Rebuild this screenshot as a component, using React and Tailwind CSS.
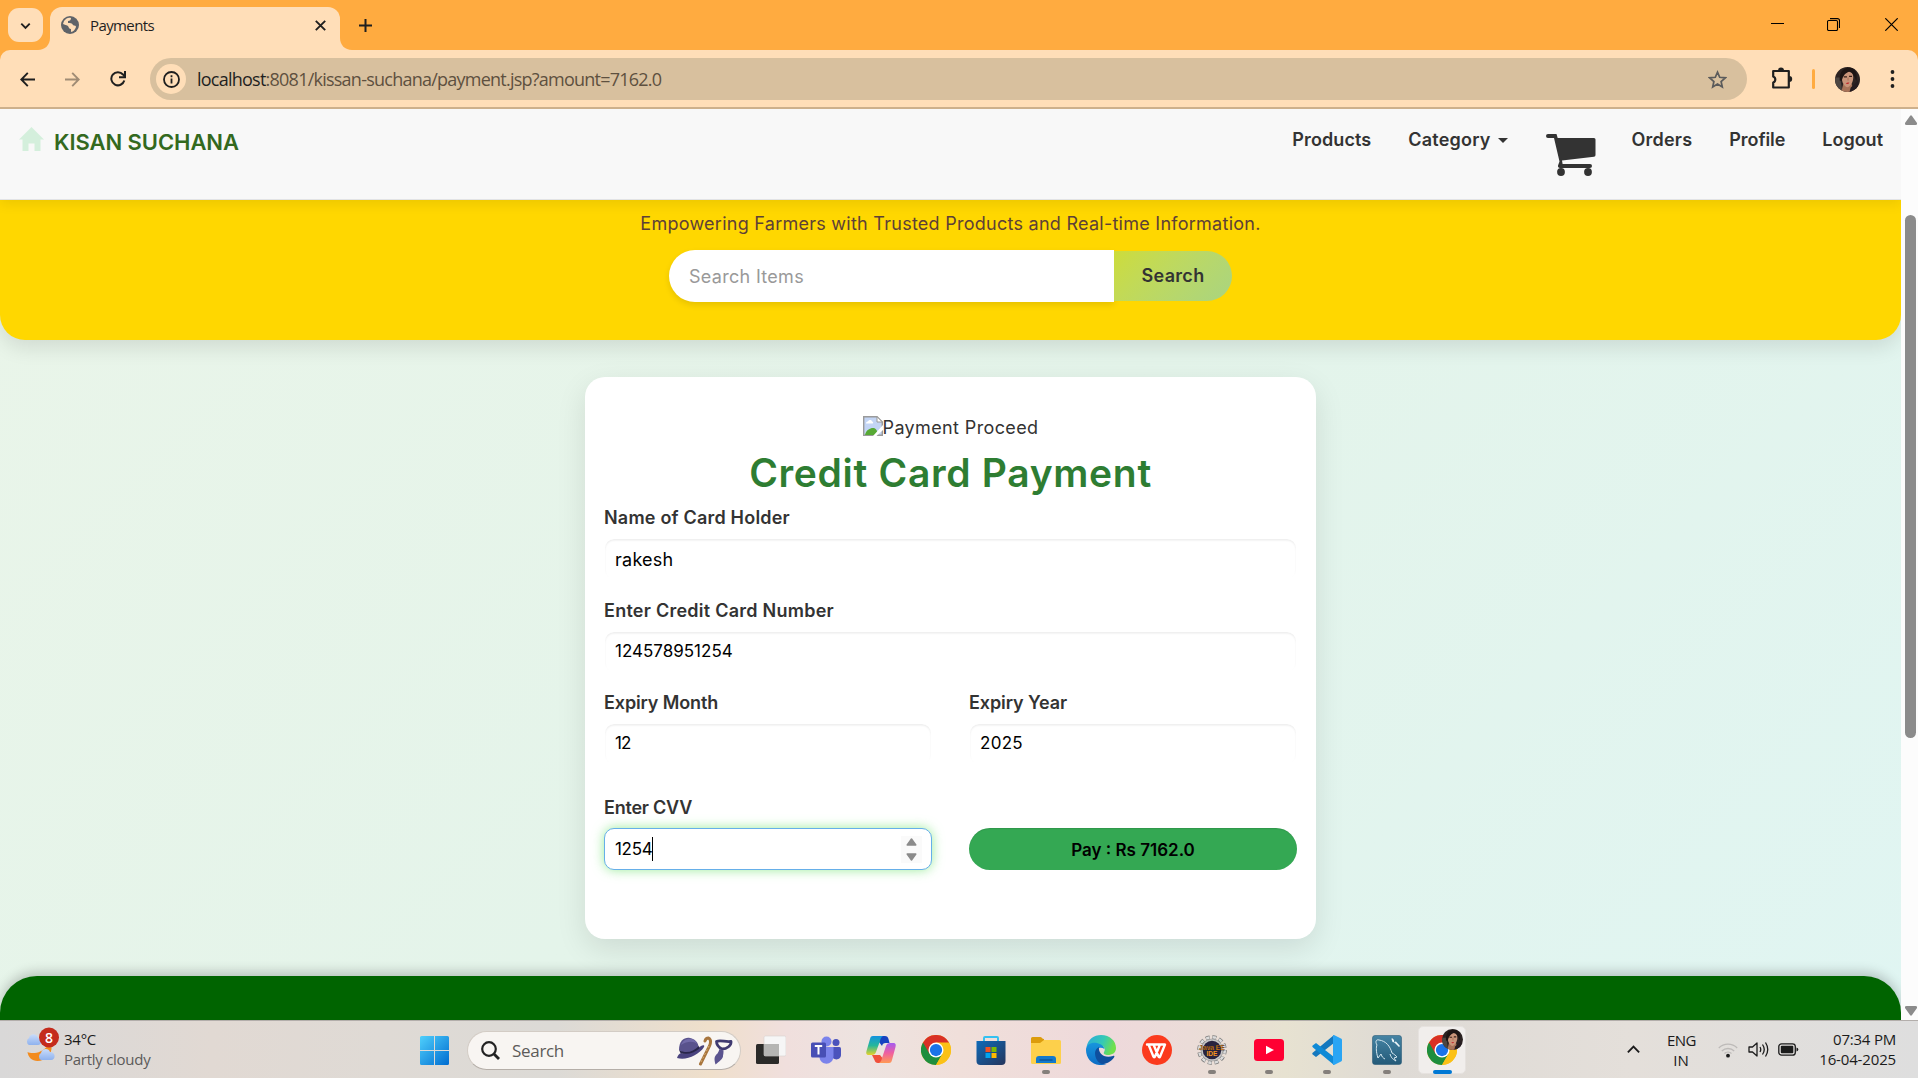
import React from "react";

function Chevron({ className, up }) {
  return (
    <svg className={className} viewBox="0 0 16 16" fill="none" stroke="currentColor" strokeWidth="2">
      <path d={up ? "M2 11l6-6 6 6" : "M3.5 6l4.5 4.5L12.500 6"} />
    </svg>
  );
}

function Portrait({ className }) {
  return (
    <svg className={className} viewBox="0 0 24 24">
      <defs>
        <clipPath id="face-clip"><circle cx="12" cy="12" r="12" /></clipPath>
      </defs>
      <g clipPath="url(#face-clip)">
        <rect width="24" height="24" fill="#2c2322" />
        <path d="M0 10h5l2 14H0z" fill="#4d4642" />
        <path d="M8 16h8l2 8H6z" fill="#a87358" />
        <path d="M6.500 10c0-5 3-7 6-7s5 3 5 7-2 8-5.500 9.500c-3-1-5.500-4.500-5.500-9.500z" fill="#c9957a" />
        <path d="M4.500 13C4 4 9 .5 14 .5s8 5.500 6.500 13c-1.500-4-3-8-7-9-3.500 1-6 4-7 9z" fill="#1d1514" />
        <path d="M8.500 9.500h3M13.500 9h2.800" stroke="#3a2119" strokeWidth="1.200" />
        <path d="M12.500 10v3" stroke="#a87056" strokeWidth="1" />
        <path d="M10.500 15.500c1.200-.8 2.500-.8 3.300-.3-.8 1.500-2.500 1.500-3.300.3z" fill="#c22a2e" />
        <path d="M15 20l7-7v11h-8z" fill="#251c20" />
      </g>
    </svg>
  );
}

function TabStrip() {
  return (
    <div className="flex h-[50px] shrink-0 bg-[#ffab40] text-[#1f1f1f]">
      <div className="mt-2 ml-2 flex h-[34px] w-[35px] items-center justify-center rounded-[11px] bg-[#ffdeb8]">
        <Chevron className="h-[15px] w-[15px]" />
      </div>
      <svg className="mt-[38px] ml-[-5px] h-3 w-3" viewBox="0 0 12 12"><path d="M12 0v12H0C7 12 12 7 12 0z" fill="#ffdeb8" /></svg>
      <div className="mt-[7px] flex w-[290px] items-center rounded-t-[12px] bg-[#ffdeb8] pb-[7px]">
        <svg className="ml-[11px] h-[18px] w-[18px] shrink-0" viewBox="0 0 18 18">
          <circle cx="9" cy="9" r="9" fill="#5f6368" />
          <path d="M3 5c2-3 5-4 7-3 0 2-1 3-3 3v2c2 0 4 0 5 2 1 1 3 0 3 2-1 3-3 5-6 5v-3c-2 0-2-2-2-3L2 8z" fill="#ffdeb8" />
          <path d="M2 9l5 1c1 2 1 3 3 3v3C5 17 2 13 2 9z" fill="#5f6368" />
          <path d="M11 2c3 1 5 4 5 7-2 0-2-1-4-2s-2-1-2-3z" fill="#5f6368" />
        </svg>
        <span className="ml-[11px] font-['Open_Sans',sans-serif] text-[15px] tracking-[-0.61px]">Payments</span>
        <svg className="mr-[14px] ml-auto h-[11px] w-[11px]" viewBox="0 0 11 11" stroke="currentColor" strokeWidth="1.9"><path d="M.8.8l9.400 9.400M10.200.8L.8 10.200" /></svg>
      </div>
      <svg className="mt-[38px] h-3 w-3" viewBox="0 0 12 12"><path d="M0 0v12h12C5 12 0 7 0 0z" fill="#ffdeb8" /></svg>
      <svg className="mt-[19px] ml-[7px] h-[13px] w-[13px]" viewBox="0 0 13 13" stroke="currentColor" strokeWidth="2"><path d="M6.500 0v13M0 6.500h13" /></svg>
      <div className="ml-auto flex text-black">
        <svg className="mt-[23px] mr-[43px] h-[1px] w-[13px]" viewBox="0 0 13 1"><rect width="13" height="1" /></svg>
        <svg className="mt-[18px] mr-[45px] h-[13px] w-[13px]" viewBox="0 0 13 13" fill="none" stroke="currentColor" strokeWidth="1.100">
          <rect x=".5" y="2.500" width="10" height="10" rx="1.200" />
          <path d="M3 .6h7.500a2 2 0 0 1 2 2V10" />
        </svg>
        <svg className="mt-[18px] mr-5 h-[13px] w-[13px]" viewBox="0 0 13 13" stroke="currentColor" strokeWidth="1.200"><path d="M.3.3l12.400 12.400M12.700.3L.3 12.700" /></svg>
      </div>
    </div>
  );
}

function Toolbar() {
  return (
    <div className="shrink-0 bg-[#ffab40]">
      <div className="flex h-[59px] items-center rounded-t-[10px] border-b-2 border-[#cdb08c] bg-[#ffdeb8] pt-[1px] text-[#1f1f1f]">
        <svg className="ml-5 h-[15px] w-[15px]" viewBox="0 0 15 15" fill="none" stroke="currentColor" strokeWidth="1.900"><path d="M15 7.500H1.500M7.800.9L1.300 7.500l6.500 6.600" /></svg>
        <svg className="ml-[30px] h-[15px] w-[15px]" viewBox="0 0 15 15" fill="none" stroke="#a08c75" strokeWidth="1.900"><path d="M0 7.500h13.500M7.200.9l6.500 6.600-6.500 6.600" /></svg>
        <svg className="ml-[30px] h-4 w-4" viewBox="0 0 16 16" fill="none" stroke="currentColor" strokeWidth="2">
          <path d="M14.300 9.500A6.600 6.600 0 1 1 13 3.500L15 6" />
          <path d="M15 0v6.300H9" />
        </svg>
        <div className="ml-6 flex h-[42px] w-[1597px] items-center rounded-full bg-[#d8c09e]">
          <div className="ml-[6px] flex h-[30px] w-[30px] items-center justify-center rounded-full bg-[#ffdeb8]">
            <svg className="h-[17px] w-[17px]" viewBox="0 0 17 17" fill="none" stroke="currentColor" strokeWidth="1.800"><circle cx="8.500" cy="8.500" r="7.500" /><path d="M8.500 7.500v5M8.500 4.300v1.900" /></svg>
          </div>
          <span className="ml-[11px] pt-[1px] font-['Open_Sans',sans-serif] text-[18px] tracking-[-0.76px] whitespace-nowrap text-[#5e503f]"><span className="text-[#1f1f1f]">localhost</span>:8081/kissan-suchana/payment.jsp?amount=7162.0</span>
          <svg className="mr-5 ml-auto h-[19px] w-[19px]" viewBox="0 0 19 19" fill="none" stroke="#5b5b5b" strokeWidth="1.700"><path d="M9.500 2.200l2.200 5.100 5.600.5-4.200 3.700 1.200 5.500-4.800-2.900L4.700 17l1.200-5.500L1.700 7.800l5.600-.5z" /></svg>
        </div>
        <svg className="mb-[2px] ml-6 h-[22px] w-[22px]" viewBox="0 0 22 22" fill="none" stroke="currentColor" strokeWidth="2.200">
          <path d="M2.200 4h15.600v16.500H2.200v-5a3.200 3.200 0 0 0 0-6z" strokeLinejoin="round" />
          <path d="M7 3.500a3 3 0 0 1 6 0zM18.200 9a3 3 0 0 1 0 6z" fill="currentColor" stroke="none" />
        </svg>
        <div className="ml-[19px] h-5 w-[3px] rounded bg-[#ffab40]" />
        <Portrait className="ml-5 h-[25px] w-[25px]" />
        <svg className="ml-[30px] h-[18px] w-[5px]" viewBox="0 0 5 18" fill="currentColor"><circle cx="2.500" cy="2" r="1.900" /><circle cx="2.500" cy="9" r="1.900" /><circle cx="2.500" cy="16" r="1.900" /></svg>
      </div>
    </div>
  );
}

function SiteNav() {
  return (
    <nav className="relative z-10 flex h-[91px] shrink-0 border-b border-[#e2e3e5] bg-[#f8f8f8] text-[18px] leading-[26px] font-semibold text-[#333] shadow-[0_4px_12px_rgba(0,0,0,0.08)]">
      <svg className="mt-[18px] ml-[19px] h-[24px] w-[25px]" viewBox="0 0 25 24" fill="#d4efdc"><path d="M12.500 0L25 12.500h-3.500V24h-6v-7.500h-6V24h-6V12.500H0z" /></svg>
      <span className="mt-5 ml-[10px] text-[22px] tracking-[-0.06px] text-[#33691e]">KISAN SUCHANA</span>
      <div className="mt-[18px] mr-[18px] ml-auto flex items-start">
        <span className="mr-[37px] tracking-[0.1px]">Products</span>
        <span className="mr-[7px] tracking-[0.2px]">Category</span>
        <svg className="mt-[11px] mr-[38px] h-[5px] w-[10px]" viewBox="0 0 10 5" fill="#333"><path d="M0 0h10L5 5z" /></svg>
        <svg className="mt-[7px] mr-[36px] h-[42px] w-[50px]" viewBox="0 0 50 42" fill="#333">
          <path d="M2 0h8.500l1.200 4H48a1.500 1.500 0 0 1 1.500 1.500V21a1.800 1.800 0 0 1-1.500 1.800L16 26.500l.6 3.500H44a2 2 0 0 1 0 4H14a2 2 0 0 1-2-2.500l1.500-4L8 4H2a2 2 0 0 1 0-4z" />
          <circle cx="15" cy="38" r="3.900" />
          <circle cx="42" cy="38" r="3.900" />
        </svg>
        <span className="mr-[37px] tracking-[0.2px]">Orders</span>
        <span className="mr-[37px] tracking-[-0.07px]">Profile</span>
        <span>Logout</span>
      </div>
    </nav>
  );
}

function Hero() {
  return (
    <section className="flex h-[140px] shrink-0 flex-col items-center rounded-b-[25px] bg-[#ffd700] shadow-[0_8px_20px_rgba(0,0,0,0.1)]">
      <p className="mt-[11px] h-[26px] text-[18px] leading-[26px] tracking-[0.26px] text-[#5d4037]">Empowering Farmers with Trusted Products and Real-time Information.</p>
      <div className="mt-[13px] flex items-center">
        <div className="flex h-[52px] w-[445px] items-center rounded-l-full bg-white pt-[1px] pl-5 text-[18px] tracking-[0.3px] text-[#999] shadow-[0_3px_6px_rgba(0,0,0,0.1)]">Search Items</div>
        <div className="z-10 flex h-[50px] w-[118px] items-center justify-center rounded-r-full bg-linear-135 from-[#cddc39] to-[#a9d480] pb-[1px] text-[18px] font-semibold tracking-[0.3px] text-[#333]">Search</div>
      </div>
    </section>
  );
}

function Field({ label, children }) {
  return (
    <div className="flex-1">
      <div className="h-7 text-[18px] leading-7 font-semibold text-[#333]">{label}</div>
      <div className="mt-[6px] mb-[1px] flex h-[42px] items-center rounded-[10px] border border-white pl-[10px] text-[17px] text-black shadow-[inset_0_1.5px_2px_rgba(0,0,0,0.07)]">{children}</div>
    </div>
  );
}

function PaymentCard() {
  return (
    <section className="mx-auto mt-[37px] h-[562px] w-[731px] shrink-0 rounded-[20px] bg-white px-[19px] pt-[35px] shadow-[0_10px_30px_rgba(0,0,0,0.1)]">
      <div className="flex h-[30px] items-center justify-center text-[18px] tracking-[0.37px] text-[#333]">
        <svg className="mb-[2px] h-5 w-5" viewBox="0 0 20 20">
          <path d="M.7.700H14l5.300 5.300v13.300H.7z" fill="#c3d5f5" stroke="#9a9a9a" strokeWidth="1.400" />
          <path d="M14 .7V6h5.300z" fill="#fff" stroke="#9a9a9a" />
          <path d="M3 7.500c0-1.500 1-2 2-2 .5-2 4-2 4 0 1.500 0 1.500 2 .5 2z" fill="#fff" />
          <path d="M2 19c1-5 5-7 8-7s4 2 5 7z" fill="#57a935" />
          <path d="M20 9L10 20h3.500L20 14z" fill="#fff" />
        </svg>
        Payment Proceed
      </div>
      <h1 className="h-[62px] text-center text-[39px] leading-[62px] font-semibold tracking-[0.68px] text-[#2e7d32]">Credit Card Payment</h1>
      <div className="flex flex-col gap-[15.5px]">
        <Field label={<span className="tracking-[0.2px]">Name of Card Holder</span>}><span className="text-[18px] tracking-[0.25px]">rakesh</span></Field>
        <Field label={<span className="tracking-[0.25px]">Enter Credit Card Number</span>}>124578951254</Field>
        <div className="flex gap-[37px]">
          <Field label={<span className="tracking-[-0.13px]">Expiry Month</span>}><span className="tracking-[-1px]">12</span></Field>
          <Field label={<span className="tracking-[-0.09px]">Expiry Year</span>}><span className="tracking-[0.3px]">2025</span></Field>
        </div>
      </div>
      <div className="mt-7 flex items-end gap-[37px]">
        <div className="flex-1">
          <div className="h-7 text-[18px] leading-7 font-semibold tracking-[-0.23px] text-[#333]">Enter CVV</div>
          <div className="mt-[6px] flex h-[42px] items-center rounded-[10px] border border-[#66afe9] bg-white pl-[10px] text-[17px] text-black shadow-[0_0_12px_rgba(120,230,120,0.75)]">
            <span className="pt-[1px] tracking-[-0.3px]">1254</span>
            <div className="h-6 w-px bg-black" />
            <svg className="mr-[9px] ml-auto h-[27px] w-[21px] bg-[#fafafa]" viewBox="0 0 21 27" fill="#8b8b8b" stroke="#8b8b8b" strokeWidth="1.500" strokeLinejoin="round"><path d="M10.500 3l4.300 6H6.200zM10.500 24l4.300-6H6.200z" /></svg>
          </div>
        </div>
        <div className="flex h-[42px] flex-1 items-center justify-center rounded-full bg-[#34a853] pt-[3px] text-[17px] font-semibold text-black shadow-[inset_0_1px_1px_rgba(0,0,0,0.1)]">Pay : Rs 7162.0</div>
      </div>
    </section>
  );
}

function Scrollbar() {
  return (
    <div className="flex w-[17px] flex-col items-center bg-[#fcfcfc] pl-[2px]">
      <svg className="mt-[6px] h-[10px] w-3" viewBox="0 0 12 10" fill="#8b8b8b"><path d="M5 1q1-1.500 2 0l5 7q.5 2-1.500 2h-9Q-.5 10 0 8z" /></svg>
      <div className="mt-[90px] h-[523px] w-[11px] rounded-full bg-[#8b8b8b]" />
      <svg className="mt-auto mb-[4px] h-[10px] w-3" viewBox="0 0 12 10" fill="#8b8b8b"><path d="M5 9q1 1.500 2 0l5-7q.5-2-1.500-2h-9Q-.5 0 0 2z" /></svg>
    </div>
  );
}

function TaskItem({ className, running, children }) {
  return (
    <div className={className}>
      <div className="h-[30px] w-[30px]">{children}</div>
      {running && <div className="mx-auto mt-[5px] h-1 w-2 rounded-full bg-[#847f7b]" />}
    </div>
  );
}

function ChromeLogo() {
  return (
    <svg className="h-[30px] w-[30px]" viewBox="0 0 48 48">
      <circle cx="24" cy="24" r="24" fill="#fbc116" />
      <path d="M24 24L3.200 12A24 24 0 0 0 24 48l10.400-18z" fill="#1e8e3e" />
      <path d="M24 24h20.800V12A24 24 0 0 0 3.200 12l10.400 18z" fill="#d93025" />
      <path d="M24 12h20.800A24 24 0 0 1 24 48l10.400-18z" fill="#fbc116" />
      <circle cx="24" cy="24" r="12" fill="#fff" />
      <circle cx="24" cy="24" r="9.800" fill="#1a73e8" />
    </svg>
  );
}

function Weather() {
  return (
    <div className="flex w-[420px] font-['Open_Sans',sans-serif] text-[15px] leading-5">
      <svg className="mt-[6px] ml-[25px] h-[36px] w-[35px]" viewBox="0 0 35 36">
        <defs>
          <linearGradient id="cloud" x2="0" y2="1"><stop stopColor="#c9dcfa" /><stop offset="1" stopColor="#8fb2ee" /></linearGradient>
        </defs>
        <path d="M2.500 25c4 2 14 2 21-7l3 1c1 8-6 15-14 15C7 34 3 30 2.500 25z" fill="#f28b1e" />
        <path d="M4 18a4 4 0 0 1 0-7C5 6 12 6 13 11c5 1 4 7 0 7z" fill="url(#cloud)" />
        <path d="M16 33a4 4 0 0 1 0-7c1-5 8-5 9-1 6 0 6 8 1 8z" fill="url(#cloud)" />
        <circle cx="24" cy="10.500" r="10" fill="#c42b1c" />
        <text x="24" y="15.500" textAnchor="middle" fontFamily="Open Sans" fontSize="14" fontWeight="600" fill="#fff">8</text>
      </svg>
      <div className="mt-[8px] ml-[4px]">
        <div className="tracking-[-0.26px] text-[#1b1b1b]">34°C</div>
        <div className="tracking-[-0.27px] text-[#5c5b5a]">Partly cloudy</div>
      </div>
    </div>
  );
}

function SearchPill() {
  return (
    <div className="mt-[10px] ml-[18px] flex h-[39px] w-[274px] items-center rounded-full border border-[#d3ccc5] border-b-[#b5aea8] bg-[#f8f5f2]">
      <svg className="ml-[13px] h-[19px] w-[19px]" viewBox="0 0 19 19" fill="none" stroke="#222" strokeWidth="2.200"><circle cx="8" cy="8" r="6.800" /><path d="M13 13l5 5" strokeWidth="2.800" /></svg>
      <span className="ml-[12px] font-['Open_Sans',sans-serif] text-[17px] tracking-[-0.31px] text-[#5d5b59]">Search</span>
      <svg className="mr-[7px] ml-auto h-[30px] w-[56px]" viewBox="0 0 56 30">
        <path d="M2 14C2 4 8 1 13 2s8 4 9 10c-6 6-13 7-20 2z" fill="#59528c" />
        <path d="M4 9c3-8 14-8 16-1-3-3-10-3-16 1z" fill="#716aa8" />
        <path d="M0 22c1-3 2-4 4-5 7 1 14-2 20-7 2-1 4-1 3 1-5 8-18 14-27 11z" fill="#4a437e" />
        <path d="M2 14c7 4 14 2 20-4l.5 2.500c-6 5-12 6.500-19 4.500z" fill="#29264a" />
        <path d="M23.500 28l9-18c2-5 1-7-1-8-2 0-3 1-3.500 3" fill="none" stroke="#a8753d" strokeWidth="3" strokeLinecap="round" />
        <path d="M24 26l9-18" stroke="#d6ac70" strokeWidth="1" strokeDasharray="2 2" />
        <path d="M39.500 5.500c4-2 9 1 14.500 0 .5 4-4 7.500-9 7.500-3-1.500-5.500-4-5.500-7.500z" fill="none" stroke="#3f3a70" strokeWidth="2.800" strokeLinejoin="round" />
        <path d="M42.500 13l4 1.500c0 2 0 3-.5 5 .5 3-4 6-7.500 9-1.500-6-1.500-8 2-11 1-1.500 1.500-3 2-4.500z" fill="#5b548f" />
      </svg>
    </div>
  );
}

function Taskbar() {
  return (
    <div className="flex h-[58px] shrink-0 items-start border-t border-[#b3aeab] bg-[linear-gradient(90deg,#d9d8d8_0%,#e1d9d3_11%,#dfdad5_20%,#dcdad6_29%,#efdfcb_37%,#f0dfdd_41%,#ede3e0_45%,#f0dfda_50%,#eed9db_58%,#ebdcd8_62%,#e7e2d1_67%,#dedad5_73%,#e4dfda_85%,#dedede_100%)]">
      <Weather />
      <svg className="mt-[15px] h-[29px] w-[29px]" viewBox="0 0 29 29">
        <defs><linearGradient id="win" gradientUnits="userSpaceOnUse" x1="0" y1="0" x2="29" y2="29"><stop stopColor="#4fd0fc" /><stop offset="1" stopColor="#006cd0" /></linearGradient></defs>
        <path d="M1.500 0H14v14H0V1.500A1.500 1.500 0 0 1 1.500 0zM15 0h12.500A1.500 1.500 0 0 1 29 1.500V14H15zM0 15h14v14H1.500A1.500 1.500 0 0 1 0 27.500zM15 15h14v12.500a1.500 1.500 0 0 1-1.500 1.500H15z" fill="url(#win)" />
      </svg>
      <SearchPill />
      <TaskItem className="mt-[14px] ml-[15px]">
        <svg viewBox="0 0 30 30">
          <rect y="9" width="23" height="20" rx="1.500" fill="#2a2a28" />
          <rect x="8" y="1" width="22" height="20" rx="1.500" fill="#f6f6f6" stroke="#d8d4d2" strokeWidth=".6" />
          <path d="M8 9h15v12H8z" fill="#b5b5b3" />
        </svg>
      </TaskItem>
      <TaskItem className="mt-[14px] ml-[25px]">
        <svg viewBox="0 0 30 30">
          <circle cx="25" cy="7.500" r="3.500" fill="#4b53bc" />
          <path d="M20 12h8.500a1.500 1.500 0 0 1 1.500 1.500V20c0 4-5 6-8 3z" fill="#4b53bc" />
          <circle cx="15.500" cy="6.500" r="5" fill="#7b83eb" />
          <path d="M9 12h13.500v9c0 10-13.500 10-14 1z" fill="#7b83eb" />
          <rect y="7.500" width="15" height="15" rx="1.500" fill="#484fb5" />
          <path d="M3.800 11h7.400M7.500 11v8.500" stroke="#fff" strokeWidth="2" />
        </svg>
      </TaskItem>
      <TaskItem className="mt-[14px] ml-[25px]">
        <svg viewBox="0 0 30 30">
          <defs>
            <linearGradient id="co1" x2="0" y2="1"><stop stopColor="#1392df" /><stop offset=".5" stopColor="#25b79b" /><stop offset="1" stopColor="#e6d22a" /></linearGradient>
            <linearGradient id="co2" x2="0" y2="1"><stop stopColor="#a45cf0" /><stop offset=".5" stopColor="#ef5fa0" /><stop offset="1" stopColor="#ff9a55" /></linearGradient>
          </defs>
          <path d="M14 1h5c2 0 3 1 3.500 3l1 4h-4c-2 0-3 1-3.500 3l-3-4z" fill="#1742c0" />
          <path d="M7 1h10c-2 1-2.500 3-3 5l-4 11c-.5 2-2 3-4 3H3c-3 0-3-2-2.500-4L4 4c.5-2 1-3 3-3z" fill="url(#co1)" />
          <path d="M6 20h8l4 5-1 3h-5c-2 0-3-1-3.500-3z" fill="#f0503c" />
          <path d="M23 28H13c2-1 2.500-3 3-5l4-12c.5-2 2-3 4-3h3c3 0 3 2 2.500 4L26 25c-.5 2-1 3-3 3z" fill="url(#co2)" />
        </svg>
      </TaskItem>
      <TaskItem className="mt-[14px] ml-[25px]"><ChromeLogo /></TaskItem>
      <TaskItem className="mt-[14px] ml-[25px]">
        <svg viewBox="0 0 30 30">
          <defs><linearGradient id="store" x2="1" y2="1"><stop stopColor="#0e6ab8" /><stop offset="1" stopColor="#25355c" /></linearGradient></defs>
          <path d="M8 7V3a1 1 0 0 1 1-1h12a1 1 0 0 1 1 1v4" fill="none" stroke="#35c1f1" strokeWidth="2" />
          <path d="M.5 6h29v20a4 4 0 0 1-4 4h-21a4 4 0 0 1-4-4z" fill="url(#store)" />
          <path d="M9.500 12h5v5h-5z" fill="#f25022" /><path d="M15.500 12h5v5h-5z" fill="#7fba00" />
          <path d="M9.500 18h5v5h-5z" fill="#00a4ef" /><path d="M15.500 18h5v5h-5z" fill="#ffb900" />
        </svg>
      </TaskItem>
      <TaskItem className="mt-[14px] ml-[25px]" running>
        <svg viewBox="0 0 30 30">
          <path d="M0 3.500A1.500 1.500 0 0 1 1.500 2H9c2 0 2 2 4 2v6H0z" fill="#dc9c0c" />
          <path d="M0 8h9l4-3h15.500A1.500 1.500 0 0 1 30 6.500v21a1.500 1.500 0 0 1-1.500 1.500h-27A1.500 1.500 0 0 1 0 27.500z" fill="#fdd04b" />
          <path d="M5 28v-4a3 3 0 0 1 3-3h14a3 3 0 0 1 3 3v4z" fill="#1379cc" />
          <path d="M8.500 25h13" stroke="#0b4f94" strokeWidth="1.300" />
        </svg>
      </TaskItem>
      <TaskItem className="mt-[14px] ml-[25px]">
        <svg viewBox="0 0 30 30">
          <defs>
            <linearGradient id="edge1" x2="1" y2=".3"><stop stopColor="#2aa9dd" /><stop offset=".6" stopColor="#35c9b5" /><stop offset="1" stopColor="#6fe04c" /></linearGradient>
            <linearGradient id="edge2" x2="0" y2="1"><stop stopColor="#1795dd" /><stop offset="1" stopColor="#0c6cc4" /></linearGradient>
          </defs>
          <path d="M.5 12C2 4 8 0 15 0c9 0 15 6 15 13 0 5-4 7-8 7-3 0-5-1-4-3 2-3 0-6-4-7-5-2-11-1-13.500 2z" fill="url(#edge1)" />
          <path d="M0 15C0 9 6 7 11 8c4 1 7 3 7.500 6-5-3-8 0-8 4 0 6 4 11 10 11C9 33 0 25 0 15z" fill="url(#edge2)" />
          <path d="M9 18c0-3 2-5 4-6-1 6 5 12 14 9 1-.5 2 .3 1 1.500-3 4-7 6.500-12 6.500-4-1-7-6-7-11z" fill="#0f4f9e" />
        </svg>
      </TaskItem>
      <TaskItem className="mt-[14px] ml-[26px]">
        <svg viewBox="0 0 30 30">
          <circle cx="15" cy="15" r="15" fill="#fb3a1d" />
          <path d="M5 9.500h13l-5 12c-.3 1-1.300 1-1.600 0L6.500 9.500M11.500 9.500l5 12c.4 1 1.200 1 1.600 0L23 9.500h-4" fill="none" stroke="#fff" strokeWidth="2.400" strokeLinejoin="round" strokeLinecap="round" />
        </svg>
      </TaskItem>
      <TaskItem className="mt-[14px] ml-[25px]" running>
        <svg viewBox="0 0 30 30">
          <circle cx="15" cy="15" r="12.800" fill="none" stroke="#777" strokeWidth="4" strokeDasharray="4 2.700" />
          <circle cx="15" cy="15" r="12.800" fill="none" stroke="#dcdcdc" strokeWidth="2.600" strokeDasharray="3.400 3.300" strokeDashoffset="-.3" />
          <circle cx="15" cy="15" r="11" fill="#c9c9c9" stroke="#888" strokeWidth=".5" />
          <circle cx="15" cy="15" r="9.300" fill="#28233f" />
          <text x="15" y="14.500" textAnchor="middle" fontFamily="Liberation Sans" fontWeight="700" fontSize="6.600" fill="#f7931e" stroke="#2a1a10" strokeWidth=".25">Java EE</text>
          <text x="15" y="20.500" textAnchor="middle" fontFamily="Liberation Sans" fontWeight="700" fontSize="6.600" fill="#f7931e">IDE</text>
        </svg>
      </TaskItem>
      <TaskItem className="mt-[14px] ml-[27px]" running>
        <svg viewBox="0 0 30 30"><rect y="4" width="30" height="22" rx="3.500" fill="#f03" /><path d="M12 10.800l8 4.200-8 4.200z" fill="#fff" /></svg>
      </TaskItem>
      <TaskItem className="mt-[14px] ml-[28px]" running>
        <svg viewBox="0 0 30 30">
          <path d="M22 0v8L4 22l-3-2.300c-1-.7-1-1.300 0-2.200z" fill="#1478be" />
          <path d="M22 30v-8L4 8l-3 2.300c-1 .7-1 1.300 0 2.200z" fill="#0f8ad6" />
          <path d="M22 0l7 3.500c.6.300 1 .8 1 1.500v20c0 .7-.4 1.200-1 1.500L22 30c-.5.200-1-.2-1-.8V.8c0-.6.500-1 1-.8z" fill="#2aa5f4" />
        </svg>
      </TaskItem>
      <TaskItem className="mt-[14px] ml-[30px]" running>
        <svg viewBox="0 0 30 30">
          <defs><linearGradient id="sql" x2="0" y2="1"><stop stopColor="#4584a4" /><stop offset="1" stopColor="#245a78" /></linearGradient></defs>
          <rect x=".5" y=".5" width="29" height="29" rx="2.500" fill="url(#sql)" stroke="#2c5d79" strokeWidth=".6" />
          <path d="M6 23C4 17 4 12 5 10 3 7 4 4 7 5c7 1 11 6 13 13 2 1 4 3 5 4l-3 1 2 3c-4-2-5-4-6-7M6 23l3-4c1 3 2 4 4 5" fill="none" stroke="#d4e6ef" strokeWidth="1" />
          <path d="M20 3l2 2v2l2-.5L28 11l-1 1-4.500-4.500-2-.5-1-3z" fill="#eef6fa" />
        </svg>
      </TaskItem>
      <div className="mt-[5px] ml-[16px] flex h-12 w-12 flex-col items-center rounded-[5px] border border-[#e6e2df] bg-[#f1eeec]">
        <div className="relative mt-[8px] h-[30px] w-[30px]">
          <ChromeLogo />
          <Portrait className="absolute top-[-6px] left-[15px] h-[21px] w-[21px]" />
        </div>
        <div className="mt-[5px] h-1 w-[19px] shrink-0 rounded-full bg-[#0078d4]" />
      </div>
      <div className="mr-[22px] ml-auto flex font-['Open_Sans',sans-serif] text-[15px] leading-5 text-[#1b1b1b]">
        <Chevron up className="mt-[21px] h-[15px] w-[15px]" />
        <div className="mt-[9px] ml-[26px] w-[28px] text-center">
          <div className="tracking-[-0.52px]">ENG</div>
          <div>IN</div>
        </div>
        <svg className="mt-[20px] ml-[23px] h-[17px] w-[20px]" viewBox="0 0 20 17" fill="none" strokeWidth="1.300">
          <path d="M.8 7a13 13 0 0 1 18.400 0M3.800 10a9 9 0 0 1 12.400 0" stroke="#bdbab8" />
          <path d="M6.500 12.500a5 5 0 0 1 7 0" stroke="#bdbab8" />
          <circle cx="10" cy="14.700" r="1.900" fill="#1b1b1b" />
        </svg>
        <svg className="mt-[20px] ml-[10px] h-[17px] w-[21px]" viewBox="0 0 21 17" fill="none" stroke="#1b1b1b" strokeWidth="1.300" strokeLinejoin="round">
          <path d="M1 6h3.500L9 2v13l-4.500-4H1zM12 6q1.500 2.500 0 5M14.500 3.500q3.500 5 0 10M17.500 1.500q4.500 7 0 14" />
        </svg>
        <svg className="mt-[22px] ml-[9px] h-[13px] w-[21px]" viewBox="0 0 21 13">
          <rect x=".8" y=".8" width="16.500" height="11.400" rx="2.800" fill="none" stroke="#1b1b1b" strokeWidth="1.300" />
          <rect x="2.800" y="2.800" width="12.500" height="7.400" rx="1" fill="#1b1b1b" />
          <path d="M18.500 4.500q1.800.3 1.800 2t-1.800 2z" fill="#1b1b1b" />
        </svg>
        <div className="mt-[8px] ml-5 w-[77px] text-right">
          <div className="tracking-[-0.21px]">07:34 PM</div>
          <div className="tracking-[-0.15px] whitespace-nowrap">16-04-2025</div>
        </div>
      </div>
    </div>
  );
}

export default function App() {
  return (
    <div className="flex h-[1078px] w-[1918px] flex-col overflow-hidden">
      <TabStrip />
      <Toolbar />
      <div className="flex h-[911px] shrink-0">
        <main className="flex w-[1901px] flex-col overflow-hidden bg-linear-135 from-[#eaf5e9] via-[#e4f4ea] to-[#e0f5f2] font-['Inter',sans-serif]">
          <SiteNav />
          <Hero />
          <PaymentCard />
          <footer className="mt-[37px] h-11 shrink-0 rounded-t-[37px] bg-[#006400] shadow-[0_-4px_12px_rgba(0,0,0,0.2)]" />
        </main>
        <Scrollbar />
      </div>
      <Taskbar />
    </div>
  );
}
